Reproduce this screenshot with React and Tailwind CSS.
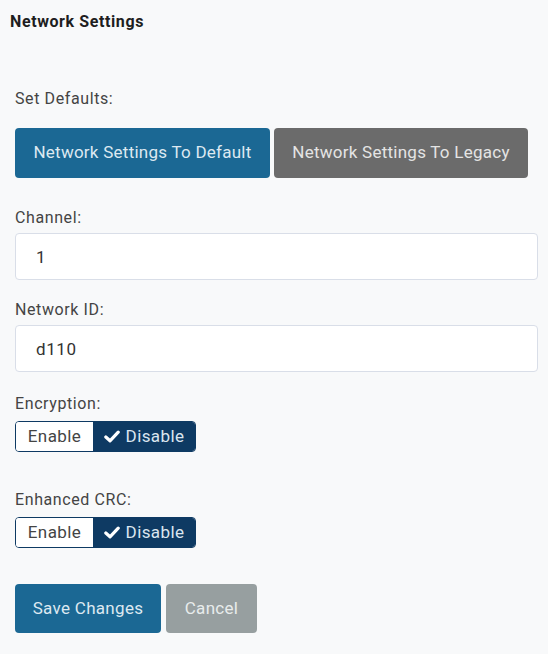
import React, { useState } from 'react';

const Toggle = ({ value, onChange }) => (
    <div className="flex h-[31px] w-[181px] overflow-hidden rounded-[4px] border border-[#0e3a63] text-[17px] tracking-[0.4px]">
        <button
            onClick={() => onChange(true)}
            className={`flex w-[77px] items-center justify-center ${value ? 'bg-[#0e3a63] text-[#dbe6f0]' : 'bg-white text-[#444]'}`}
        >
            {value && <Check />}Enable
        </button>
        <button
            onClick={() => onChange(false)}
            className={`flex flex-1 items-center justify-center ${!value ? 'bg-[#0e3a63] text-[#dbe6f0]' : 'bg-white text-[#444]'}`}
        >
            {!value && <Check />}Disable
        </button>
    </div>
);

const Check = () => (
    <svg width="16" height="13" viewBox="0 0 16 13" className="mr-[6px]">
        <path d="M1.8 7 L6 10.8 L14.2 2.2" fill="none" stroke="#ffffff" strokeWidth="3.2" strokeLinecap="round" strokeLinejoin="round" />
    </svg>
);

const App = () => {
    const [channel, setChannel] = useState('1');
    const [networkId, setNetworkId] = useState('d110');
    const [encryption, setEncryption] = useState(false);
    const [crc, setCrc] = useState(false);

    return (
        <div className="min-h-[654px] w-[548px] bg-[#f8f9fa] font-['Roboto',sans-serif] text-[#444]">
            <div className="px-[10px] pt-[12px] text-[16px] font-bold leading-[20px] tracking-[0.6px] text-[#1e1e1e]">Network Settings</div>

            <div className="flex flex-col pl-[15px] pr-[10px] text-[16px] tracking-[0.6px]">
                <div className="mt-[57px] leading-[20px]">Set Defaults:</div>
                <div className="mt-[19px] flex gap-[4px] text-[17px] tracking-[0.25px]">
                    <button className="h-[50px] w-[255px] rounded-[4px] bg-[#1b6894] text-[#dde9f1]">
                        Network Settings To Default
                    </button>
                    <button className="h-[50px] w-[254px] rounded-[4px] bg-[#6b6b6b] text-[#e4e4e4]">
                        Network Settings To Legacy
                    </button>
                </div>

                <label className="mt-[30px] leading-[20px]">Channel:</label>
                <input
                    value={channel}
                    onChange={e => setChannel(e.target.value)}
                    className="mt-[5px] h-[47px] w-[523px] rounded-[4px] border border-[#d9dee8] bg-white px-[20px] text-[17px] text-[#333] outline-none"
                />

                <label className="mt-[20px] leading-[20px]">Network ID:</label>
                <input
                    value={networkId}
                    onChange={e => setNetworkId(e.target.value)}
                    className="mt-[5px] h-[47px] w-[523px] rounded-[4px] border border-[#d9dee8] bg-white px-[20px] text-[17px] text-[#333] outline-none"
                />

                <label className="mt-[22px] leading-[20px]">Encryption:</label>
                <div className="mt-[7px]">
                    <Toggle value={encryption} onChange={setEncryption} />
                </div>

                <label className="mt-[38px] leading-[20px]">Enhanced CRC:</label>
                <div className="mt-[7px]">
                    <Toggle value={crc} onChange={setCrc} />
                </div>

                <div className="mt-[36px] flex gap-[5px] text-[17px] tracking-[0.3px]">
                    <button className="h-[49px] w-[146px] rounded-[4px] bg-[#1b6894] text-[#dde9f1]">Save Changes</button>
                    <button className="h-[49px] w-[91px] rounded-[4px] bg-[#979fa0] text-[#e8ecec]">Cancel</button>
                </div>
            </div>
        </div>
    );
};

export default App;
